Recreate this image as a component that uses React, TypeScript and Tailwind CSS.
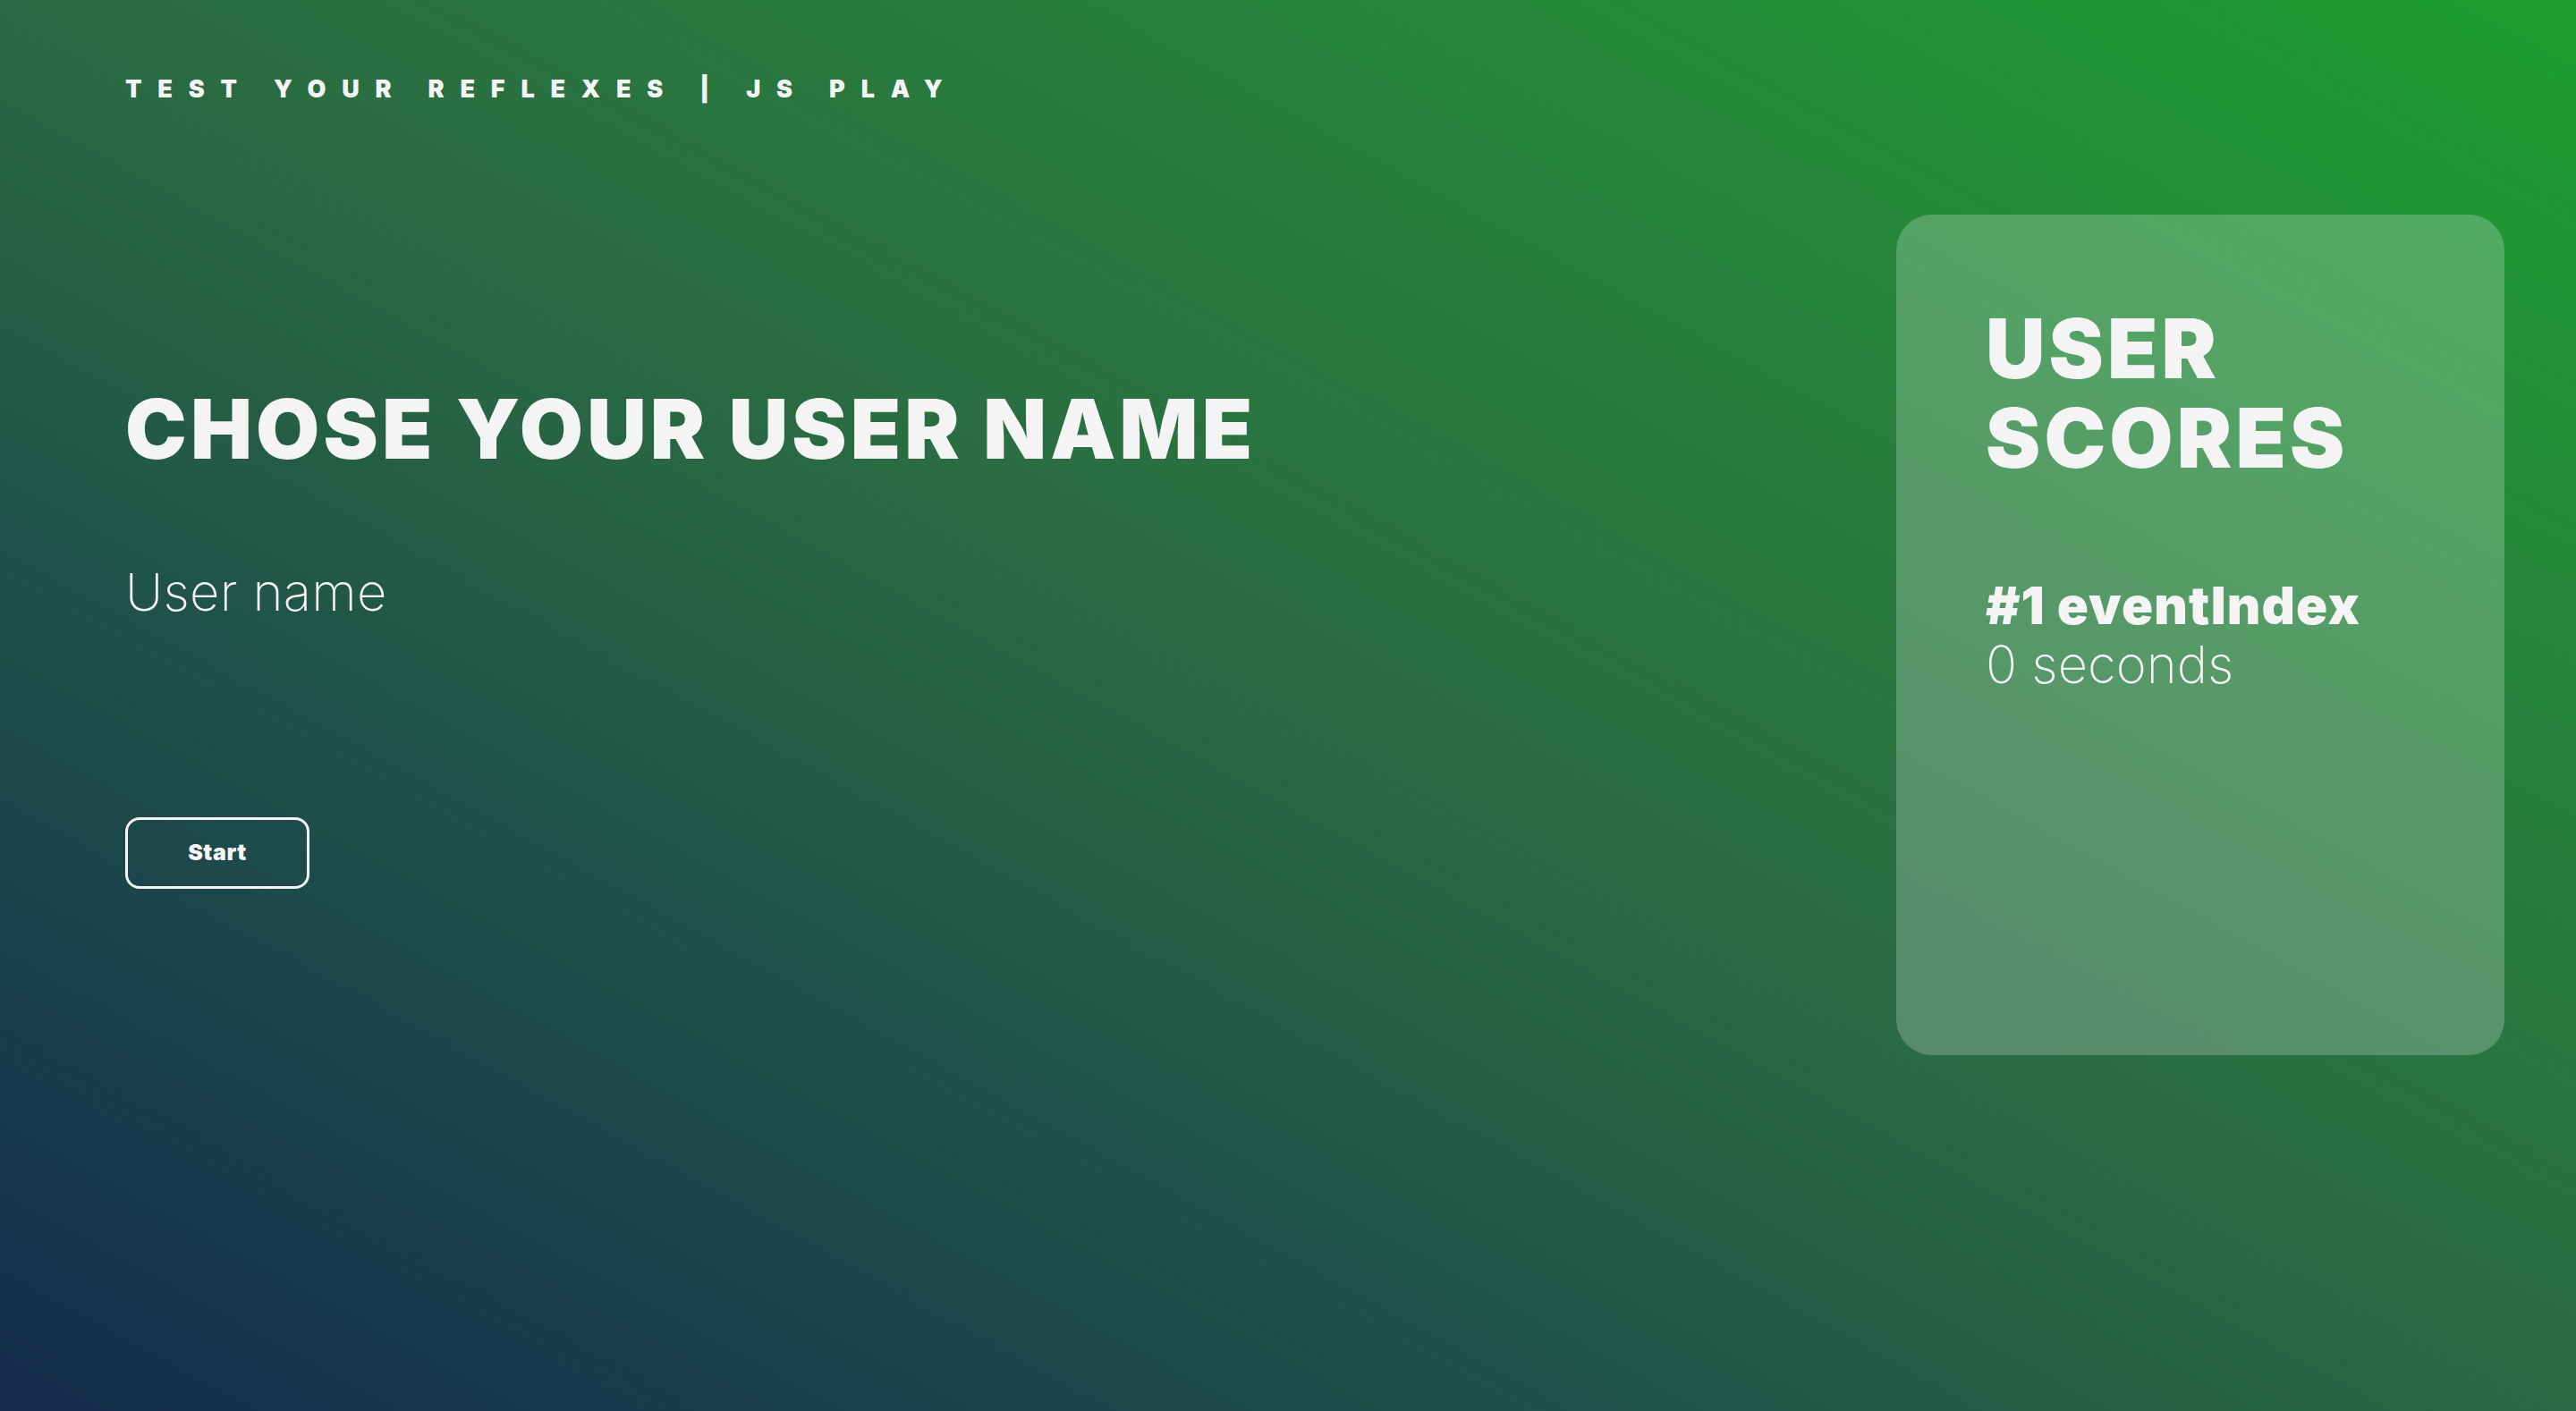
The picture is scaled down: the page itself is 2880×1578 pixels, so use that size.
export default function App() {
  const scores = [{ rank: 1, name: "eventIndex", time: 0 }];

  return (
    <div className="min-h-screen w-full bg-linear-to-tr from-[#152a4c] via-[#2a6a42] to-[#1c9e2e] font-['Inter','Liberation_Sans',sans-serif] text-[#f4f4f4]">
      <div className="flex min-h-screen justify-between pl-[140px] pr-[80px]">
        <div className="flex flex-col items-start">
          <header className="pt-[85px] text-[27px] font-black leading-[30px] tracking-[0.66em]">
            TEST YOUR REFLEXES | JS PLAY
          </header>

          <h1 className="mt-[315px] text-[92px] font-black leading-[100px] tracking-[0.045em]">
            CHOSE YOUR USER NAME
          </h1>

          <input
            type="text"
            placeholder="User name"
            className="mt-[97px] w-[800px] bg-transparent text-[58px] font-extralight leading-[70px] tracking-[0.005em] text-[#f4f4f4] outline-none placeholder:text-[#f4f4f4]"
          />

          <button className="mt-[217px] h-[80px] w-[206px] rounded-2xl border-[3px] border-[#f4f4f4] text-[25px] font-black tracking-[0.02em]">
            Start
          </button>
        </div>

        <aside className="mt-[240px] h-[940px] w-[680px] rounded-[40px] bg-white/[0.22] px-[100px] pt-[100px]">
          <h2 className="text-[92px] font-black leading-[100px] tracking-[0.045em]">
            USER
            <br />
            SCORES
          </h2>
          <ul className="mt-[104px]">
            {scores.map((s) => (
              <li key={s.rank}>
                <div className="text-[58px] font-black leading-[66px] tracking-[0.02em]">
                  #{s.rank} {s.name}
                </div>
                <div className="text-[58px] font-extralight leading-[66px]">{s.time} seconds</div>
              </li>
            ))}
          </ul>
        </aside>
      </div>
    </div>
  );
}
